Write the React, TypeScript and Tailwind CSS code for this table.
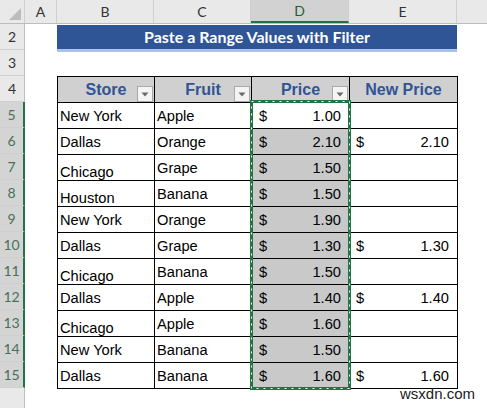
import React from "react";

type Row = { store: string; fruit: string; price: string; np: string; shade: boolean; low?: boolean };

const rows: Row[] = [
  { store: "New York", fruit: "Apple", price: "1.00", np: "", shade: false },
  { store: "Dallas", fruit: "Orange", price: "2.10", np: "2.10", shade: true },
  { store: "Chicago", fruit: "Grape", price: "1.50", np: "", shade: true, low: true },
  { store: "Houston", fruit: "Banana", price: "1.50", np: "", shade: true, low: true },
  { store: "New York", fruit: "Orange", price: "1.90", np: "", shade: true },
  { store: "Dallas", fruit: "Grape", price: "1.30", np: "1.30", shade: true },
  { store: "Chicago", fruit: "Banana", price: "1.50", np: "", shade: true, low: true },
  { store: "Dallas", fruit: "Apple", price: "1.40", np: "1.40", shade: true },
  { store: "Chicago", fruit: "Apple", price: "1.60", np: "", shade: true, low: true },
  { store: "New York", fruit: "Banana", price: "1.50", np: "", shade: true },
  { store: "Dallas", fruit: "Banana", price: "1.60", np: "1.60", shade: true },
];

const rowNums = [2, 3, 4, 5, 6, 7, 8, 9, 10, 11, 12, 13, 14, 15, 16];

function FilterBtn() {
  return (
    <div className="absolute right-[1px] bottom-0 w-[16px] h-[16px] bg-[#f4f4f4] border border-[#a9a9a9] flex items-center justify-center">
      <svg width="8" height="5" viewBox="0 0 8 5">
        <path d="M0.5 0.5 L7.5 0.5 L4 4.5 Z" fill="#6a6a6a" />
      </svg>
    </div>
  );
}

export default function App() {
  const hdrFont = "font-['Lato','Open_Sans',sans-serif]";
  return (
    <div className="relative w-[487px] h-[408px] overflow-hidden bg-white font-['Liberation_Sans',Arial,sans-serif]">
      {/* column headers */}
      <div className={`flex h-[24px] bg-[#e9e9e9] border-b border-[#bdbdbd] text-[14px] text-[#333] ${hdrFont}`}>
        <div className="w-[25px] shrink-0 border-r border-[#cfcfcf] relative">
          <svg className="absolute left-[9px] top-[8px]" width="12" height="12" viewBox="0 0 12 12">
            <path d="M12 0 L12 12 L0 12 Z" fill="#bcbcbc" />
          </svg>
        </div>
        <div className="w-[32px] shrink-0 border-r border-[#cfcfcf] flex items-center justify-center">A</div>
        <div className="w-[97px] shrink-0 border-r border-[#cfcfcf] flex items-center justify-center">B</div>
        <div className="w-[97px] shrink-0 border-r border-[#cfcfcf] flex items-center justify-center">C</div>
        <div className="w-[98px] shrink-0 border-r border-[#cfcfcf] bg-[#d2d2d2] border-b-2 border-b-[#217346] text-[#1d5f3a] flex items-center justify-center">D</div>
        <div className="w-[108px] shrink-0 border-r border-[#cfcfcf] flex items-center justify-center">E</div>
        <div className="flex-1" />
      </div>

      <div className="flex">
        {/* row headers */}
        <div className={`w-[25px] shrink-0 flex flex-col text-[14px] ${hdrFont}`}>
          {rowNums.map((n) => {
            const hl = n >= 5 && n <= 15;
            return (
              <div
                key={n}
                className={`h-[26px] shrink-0 border-b border-[#d0d0d0] flex items-center justify-center ${
                  hl
                    ? "bg-[#d4d4d4] border-r-2 border-r-[#217346] text-[#4a6f58]"
                    : "bg-[#e9e9e9] border-r border-r-[#bdbdbd] text-[#333]"
                }`}
              >
                {n === 16 ? "" : n}
              </div>
            );
          })}
        </div>

        {/* sheet */}
        <div className="flex-1 flex flex-col pl-[32px]">
          <div className="h-[52px] pt-[1px]">
            <div className="w-[400px] h-[24px] bg-[#2f5597] flex items-center justify-center text-white font-bold text-[16px] font-['Lato','Open_Sans',sans-serif]">
              Paste a Range Values with Filter
            </div>
            <div className="w-[400px] h-[3px] bg-[#a9c4e8]" />
          </div>

          <div className="w-[401px] bg-black p-px grid grid-cols-[96px_96px_97px_107px] auto-rows-[25px] gap-px">
            {["Store", "Fruit", "Price", "New Price"].map((h, i) => (
              <div
                key={h}
                className="relative bg-[#d0d0d0] flex items-center justify-center text-[16px] font-bold text-[#305496]"
              >
                {h}
                {i < 3 && <FilterBtn />}
              </div>
            ))}
            {rows.map((r, i) => (
              <React.Fragment key={i}>
                <div className={`bg-white flex items-center px-[2px] text-[14.67px] text-black ${r.low ? "pt-[8px]" : ""}`}>
                  {r.store}
                </div>
                <div className="bg-white flex items-center px-[2px] text-[14.67px] text-black">{r.fruit}</div>
                <div
                  className={`${r.shade ? "bg-[#c9c9c9]" : "bg-white"} flex items-center justify-between pl-[7px] pr-[8px] text-[14.67px] text-black`}
                >
                  <span>$</span>
                  <span>{r.price}</span>
                </div>
                <div className="bg-white flex items-center justify-between pl-[6px] pr-[8px] text-[14.67px] text-black">
                  {r.np ? (
                    <>
                      <span>$</span>
                      <span>{r.np}</span>
                    </>
                  ) : null}
                </div>
              </React.Fragment>
            ))}
          </div>
        </div>
      </div>

      {/* copy selection marching ants */}
      <svg className="absolute left-[250px] top-[100px]" width="101" height="290" viewBox="0 0 101 290">
        <rect x="1.5" y="1.5" width="98" height="287" fill="none" stroke="#217346" strokeWidth="3" />
        <rect x="1.5" y="1.5" width="98" height="287" fill="none" stroke="#ffffff" strokeWidth="1" strokeDasharray="2 5" />
      </svg>

      <div className="absolute right-[12px] bottom-[3px] text-[15px] text-[#222] font-['Liberation_Sans',Arial,sans-serif]">
        wsxdn.com
      </div>
    </div>
  );
}
